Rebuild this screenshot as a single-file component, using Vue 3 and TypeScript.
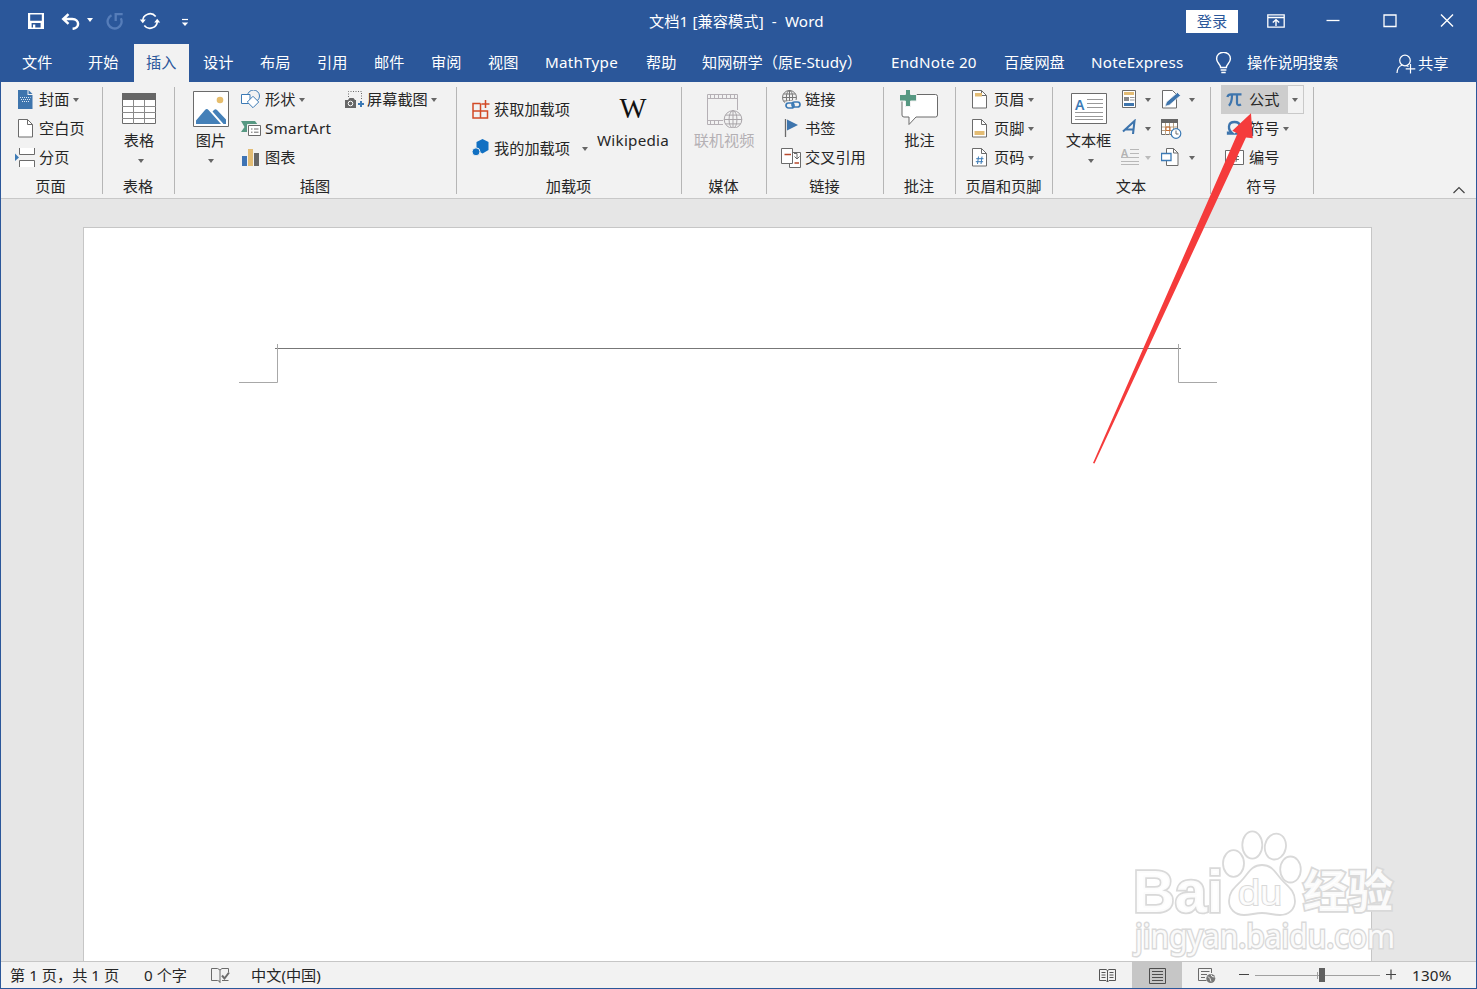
<script setup lang="ts">
import { h, type FunctionalComponent } from 'vue'

const G = '#6b6b6b'
const B = '#3c7ab5'
const pageShape = (fill = '#fff') =>
  `<path d="M.5.5h9l5 5v12.5h-14z" fill="${fill}" stroke="${G}"/><path d="M9.5.5v5h5" fill="none" stroke="${G}"/>`
const globe = (x: number, y: number, r: number, c: string) =>
  `<g transform="translate(${x} ${y})" fill="#f2f2f2" stroke="${c}"><circle r="${r}"/><ellipse rx="${r * 0.45}" ry="${r}" fill="none"/><path d="M${-r} 0H${r}M${-r * 0.85} ${-r * 0.5}H${r * 0.85}M${-r * 0.85} ${r * 0.5}H${r * 0.85}M0 ${-r}V${r}" fill="none"/></g>`

// name -> [width, height, markup]
const art: Record<string, [number, number, string]> = {
  save: [18, 18, `<path d="M1 1h16v16H1z" fill="#fff"/><path d="M3.2 2.4h11.6v6.4H3.2zM4.600 11h9v4.600H8.300v-3H6v3H4.600z" fill="#2b579a"/>`],
  undo: [19, 17, `<path d="M7.500 1.200 2.300 6l5.200 4.800M2.800 6h8.400c8 .4 7.500 9.400.4 9.800" fill="none" stroke="#fff" stroke-width="2.500"/>`],
  redo: [18, 18, `<path d="M5.500 3.200A7 7 0 1 0 14.800 6.200M9.700 9V2.200h7" fill="none" stroke="#567db9" stroke-width="2.300"/>`],
  sync: [22, 18, `<path d="M3.700 9a7.300 7.300 0 0 1 13-4.500M18.300 9a7.300 7.300 0 0 1-13 4.500" fill="none" stroke="#fff" stroke-width="1.600"/><path d="M.8 7.500h6L3.800 11.300zM15.200 10.500h6L18.200 6.700z" fill="#fff"/>`],
  custom: [8, 9, `<path d="M1 1.500h6" stroke="#fff" stroke-width="1.200"/><path d="M.8 4.500h6.400L4 8z" fill="#fff"/>`],
  ribbonopt: [18, 14, `<path d="M.8.800h16.400v12.400H.8z" fill="none" stroke="#fff" stroke-width="1.300"/><path d="M1 3.500h16M9 12V6M5.800 8.600 9 5.600l3.200 3" fill="none" stroke="#fff" stroke-width="1.400"/>`],
  min: [14, 14, `<path d="M.5 6.500h13" stroke="#fff" stroke-width="1.300"/>`],
  max: [14, 14, `<path d="M1 1h12v11.500H1z" fill="none" stroke="#fff" stroke-width="1.300"/>`],
  close: [14, 14, `<path d="M1 .5l12 12M13 .5l-12 12" stroke="#fff" stroke-width="1.400"/>`],
  bulb: [17, 22, `<path d="M5.600 15.500c0-3.300-4-4.500-4-8.800a6.900 6.500 0 0 1 13.800 0c0 4.300-4 5.500-4 8.800z" fill="none" stroke="#fff" stroke-width="1.400"/><path d="M5.600 18h5.800M6.300 20.500h4.400" stroke="#fff" stroke-width="1.300"/>`],
  share: [20, 20, `<circle cx="9" cy="6.500" r="5.300" fill="none" stroke="#fff" stroke-width="1.200"/><path d="M1 19c.2-4.200 2-7 5.300-8M14.500 10v9.500M9.700 14.800h9.600M10.500 11.700l2 .8" fill="none" stroke="#fff" stroke-width="1.200"/>`],
  cover: [20, 19, `<path d="M3 0h9.500v5H17.500v18.200H3z" fill="#3e75ad"/><path d="M13.500 0v4h4z" fill="#3e75ad"/><path d="M5 7.500h10.500M6 9.500h10M7 11.500h8" stroke="#dce8f4" stroke-dasharray="1 1" stroke-width="1.200"/>`],
  blank: [20, 19, `<g transform="translate(3 0)">${pageShape()}</g>`],
  brk: [20, 19, `<path d="M4.500 0v6.500h15V0M4.500 19v-6.500h15V19" fill="#fff" stroke="${G}"/><path d="M0 5.500 4 9.500 0 13z" fill="${B}"/>`],
  table: [34, 38, `<path d="M.5 4.500h33v29H.5z" fill="#fff" stroke="${G}"/><path d="M0 3h34v7H0z" fill="#666"/><path d="M11.500 10v24M22.500 10v24M0 16.500h34M0 22.500h34M0 28.500h34" stroke="#8a8a8a"/>`],
  pic: [36, 38, `<path d="M.5 1.500h35v35H.5z" fill="#fff" stroke="${G}"/><circle cx="27" cy="10" r="3.300" fill="#e6bd6c"/><path d="M3 34V30.500L12 20c1-1.300 2.500-1.300 3.500 0L28 34zM19.500 21.500l1.500-1.500c1-1 2-1 3 0L33 29.500V34h-2.500z" fill="#4480b8"/>`],
  shapes: [21, 19, `<circle cx="13.500" cy="6" r="6" fill="#f2f2f2" stroke="${B}"/><path d="M1.500 4.500h8.500v9H1.500z" fill="#fff" stroke="${B}"/><path d="M13 6.300l5.700 5.700-5.700 5.700L7.300 12z" fill="#fff" stroke="${B}"/>`],
  smart: [21, 19, `<path d="M1 2h14l3 4h-8v7H1l3.500-5z" fill="#569882"/><path d="M7.500 5.500h13v12h-13z" fill="#fff" stroke="#f2f2f2"/><path d="M8.500 6.500h12v10h-12z" fill="#fff" stroke="${G}"/><path d="M11 10h1.500M14 10h4.500M11 13.200h1.500M14 13.200h4.500" stroke="${G}"/>`],
  chart: [21, 19, `<path d="M2 8h5v10H2z" fill="#3e73b4"/><path d="M8 1h5v17H8z" fill="#e3bc74"/><path d="M14 5h5v13h-5z" fill="#666"/>`],
  shot: [21, 19, `<path d="M3.500 7V1.500h13V10" fill="none" stroke="${G}" stroke-dasharray="1 1.500"/><path d="M0 10h3l1.500-2h4L10 10h1v8H0z" fill="#666"/><circle cx="5.500" cy="13.500" r="2.300" fill="#666" stroke="#fff"/><path d="M16 11v6M13 14h6" stroke="${B}" stroke-width="2"/>`],
  getadd: [20, 20, `<path d="M9.500 3.500H2V18h14.500V11H2M9.500 3.500V18M14.500 0v8M10.500 4h8" fill="none" stroke="#d24a26" stroke-width="1.500"/>`],
  myadd: [20, 20, `<path d="M11.500 0l6 3v8l-6 3.500-6-3.500V3z" fill="#1170c2"/><circle cx="5" cy="12.800" r="4" fill="#1170c2" stroke="#f2f2f2"/>`],
  wiki: [34, 38, `<text x="17" y="28" text-anchor="middle" textLength="27" lengthAdjust="spacingAndGlyphs" font-family="Liberation Serif, serif" font-size="29" fill="#111">W</text>`],
  video: [38, 38, `<g stroke="#b5b0b5" fill="none"><path d="M2.500 4.500h30V20M2.500 4.500v30H18" fill="none"/><path d="M2.500 8.500h30M2.500 30.500H18M5.500 4v4M9.500 4v4M13.500 4v4M17.500 4v4M21.500 4v4M25.500 4v4M29.500 4v4M5.500 31v4M9.500 31v4M13.500 31v4"/></g>${globe(28, 29.5, 8.8, '#a9a5a9')}`],
  link: [21, 20, `${globe(8.5, 7.5, 7, '#777')}<g fill="none" stroke="#f2f2f2" stroke-width="4"><rect x="5" y="13" width="8" height="5" rx="2.500"/><rect x="11" y="12" width="8" height="5" rx="2.500"/></g><g fill="none" stroke="${B}" stroke-width="1.700"><rect x="5" y="13" width="8" height="5" rx="2.500"/><rect x="11" y="12" width="8" height="5" rx="2.500"/></g>`],
  flag: [21, 19, `<path d="M4.500 0v18" stroke="${G}" stroke-width="1.300"/><path d="M6 .5l11 5.500-11 5.500z" fill="#3e75ad"/>`],
  xref: [21, 20, `<path d="M8.500 4.500h11v15h-11z" fill="#fff" stroke="${G}"/><path d="M.5.500h11v15H.5z" fill="#fff" stroke="${G}"/><path d="M3.500 6.500H10M13.500 15H18" stroke="#b8492c" stroke-width="1.700"/><path d="M13 5.500h3v5M13.500 8.500l2.500 2.500 2.500-2.500" fill="none" stroke="${G}"/>`],
  comment: [40, 38, `<path d="M3.500 4.500h32a2 2 0 0 1 2 2v18.500a2 2 0 0 1-2 2H16l-7 7.500V27H4a2 2 0 0 1-2-2V6z" fill="#fff" stroke="${G}"/><path d="M-.5 4.500h6V-1h5v5.500h6V11h-6v5.500h-5V11h-6z" fill="#569882" stroke="#f2f2f2"/>`],
  head: [16, 19, `${pageShape()}<path d="M3 3h7v3.500H3z" fill="#e3bc74"/>`],
  foot: [16, 19, `${pageShape()}<path d="M2.500 12h10v4h-10z" fill="#e3bc74"/>`],
  num: [16, 19, `${pageShape()}<path d="M6.500 8.500l-1 7.500M10 8.500l-1 7.500M4.200 10.700h7.300M3.800 13.700h7.300" stroke="${B}"/>`],
  textbox: [36, 38, `<path d="M.5 3.500h35v30H.5z" fill="#fff" stroke="${G}"/><text x="4" y="19.500" font-family="Noto Sans, sans-serif" font-size="14" font-weight="600" fill="${B}">A</text><path d="M16 9.500h16M16 13.500h16M16 17.500h16M4 22.500h28M4 26.500h28M4 29.500h28" stroke="#999"/>`],
  parts: [16, 19, `<path d="M1.500.500h13v17h-13z" fill="#fff" stroke="${G}"/><path d="M3 2h10v3H3z" fill="#e3bc74"/><path d="M3 7h5v4H3z" fill="#888"/><path d="M9 7.500h4.500M9 10h4.500" stroke="#999"/><path d="M3 13h10v3H3z" fill="#3e75ad"/>`],
  wordart: [20, 19, `<path d="M2 12.500 13.500 2 12 15M4.500 10.500h8" fill="none" stroke="#3e75ad" stroke-width="2.100"/>`],
  dropcap: [20, 19, `<text x="0" y="8.500" font-family="Noto Sans, sans-serif" font-size="10.500" font-weight="600" fill="#b3b3b3">A</text><path d="M9 1.500h9M9 5.500h9M0 9.500h18M0 13.500h18M0 16.500h18" stroke="#b8b8b8"/>`],
  sign: [21, 19, `<path d="M1.500.500h10l4 4v13.500h-14z" fill="#fff" stroke="${G}"/><path d="M4 16.500l1.500-4.500 11-9.500 3 3-11 9.500z" fill="#3e75ad" stroke="#f2f2f2" stroke-width=".8"/>`],
  date: [21, 20, `<path d="M.5 1.500h16v14H.5z" fill="#fff" stroke="${G}"/><path d="M0 0h17v4H0z" fill="#666"/><path d="M4.500 4v12M8.500 4v12M12.500 4v12M1 8h15M1 11.500h15" stroke="#b9a184"/><path d="M5 8h4v3.500H5z" fill="none" stroke="#c86b2c"/><circle cx="15" cy="14.500" r="4.800" fill="#fff" stroke="${B}" stroke-width="1.200"/><path d="M15 11.500V15h2.500" fill="none" stroke="${G}"/>`],
  object: [21, 19, `<path d="M5.500.500h7l4.500 4.500v12.500H5.500z" fill="#fff" stroke="${G}"/><path d="M12.500.500V5H17" fill="none" stroke="${G}"/><path d="M.500 5.500h9.500v7H.5z" fill="#fff" stroke="${B}" stroke-width="1.300"/>`],
  pi: [20, 19, `<path d="M2.300 7C3 4.800 4 4.300 6 4.300h10.500M7 5c0 5-.7 8-3 10.800M12 5v8c0 2.300 2 2.600 4 1.500" fill="none" stroke="#3e75ad" stroke-width="2.200"/>`],
  omega: [20, 19, `<path d="M3 12.500v2h4.500c-5-4-5-11.500 2-11.500s7 7.500 2 11.500H16v-2" fill="none" stroke="#3e75ad" stroke-width="2.300"/>`],
  number: [20, 19, `<path d="M.5 2.500h18v14H.5z" fill="#fff" stroke="${G}"/><path d="M8 6l-1 8M12 6l-1 8M5 8.500h9M5 11.500h9" stroke="${G}"/>`],
  collapse: [12, 8, `<path d="M.5 7 6 1.500 11.500 7" fill="none" stroke="#444" stroke-width="1.200"/>`],
  proof: [19, 17, `<path d="M9 14.500 6.500 13.500H.5V1.500h6L9 3l2-1.500h6.500V5M9 3v13M11 13.500h6.500" fill="none" stroke="${G}"/><path d="M11 8.500l2.500 3 4.500-6" fill="none" stroke="${G}" stroke-width="2"/>`],
  read: [17, 15, `<path d="M8.500 2.500 7 1.500H.5v11H7l1.500 1.500 1.500-1.500h6.500v-11H10zV14M2.500 4.500h4M2.500 7h4M2.500 9.500h4M10.500 4.500h4M10.500 7h4M10.500 9.500h4" fill="none" stroke="#555"/>`],
  print: [17, 16, `<path d="M.5.500h16v15H.5zM3 3.500h11M3 6.500h11M3 9.500h11M3 12.500h11" fill="none" stroke="#4d4d4d"/>`],
  web: [18, 17, `<path d="M13.500 6V1.500H.5v12h8M3 4.500h8.500M3 7.500h6M3 10.500h4" fill="none" stroke="${G}"/><circle cx="12.800" cy="11.500" r="4.500" fill="#777"/><path d="M10 9.500l2 2 1 3M13 7.500l1 2 2.500.5" stroke="#eee" fill="none"/>`],
}

const Ico: FunctionalComponent<{ n: string }> = (p) => {
  const [w, ht, body] = art[p.n]
  return h('svg', { width: w, height: ht, viewBox: `0 0 ${w} ${ht}`, innerHTML: body })
}
Ico.props = ['n']

const title = '文档1 [兼容模式]  -  Word'

interface Tab { t: string; w: number; pad: number; cls?: string }
const tabs: Tab[] = [
  { t: '文件', w: 76, pad: 22 },
  { t: '开始', w: 58, pad: 12 },
  { t: '插入', w: 55, pad: 12, cls: 'active' },
  { t: '设计', w: 57, pad: 14 },
  { t: '布局', w: 57, pad: 14 },
  { t: '引用', w: 57, pad: 14 },
  { t: '邮件', w: 57, pad: 14 },
  { t: '审阅', w: 57, pad: 14 },
  { t: '视图', w: 57, pad: 14 },
  { t: 'MathType', w: 101, pad: 14, cls: 'latin' },
  { t: '帮助', w: 57, pad: 14 },
  { t: '知网研学（原E-Study）', w: 188, pad: 13 },
  { t: 'EndNote 20', w: 114, pad: 14, cls: 'latin' },
  { t: '百度网盘', w: 86, pad: 13 },
  { t: 'NoteExpress', w: 124, pad: 14, cls: 'latin' },
]
</script>

<template>
  <div class="window">
    <header class="titlebar">
      <div class="quick">
        <Ico n="save" class="q-save" /><Ico n="undo" class="q-undo" /><i class="caret light q-caret" />
        <Ico n="redo" class="q-redo" /><Ico n="sync" class="q-sync" /><Ico n="custom" class="q-custom" />
      </div>
      <div class="title">{{ title }}</div>
      <button class="login">登录</button>
      <div class="controls"><Ico n="ribbonopt" /><Ico n="min" /><Ico n="max" /><Ico n="close" /></div>
    </header>

    <nav class="tabs">
      <a v-for="tab in tabs" :key="tab.t" class="tab" :class="tab.cls" :style="{ width: tab.w + 'px', paddingLeft: tab.pad + 'px' }">{{ tab.t }}</a>
      <Ico n="bulb" class="bulb" />
      <span class="tell">操作说明搜索</span>
      <Ico n="share" class="share-ico" />
      <span class="share">共享</span>
    </nav>

    <div class="ribbon">
      <section class="group g-pages">
        <div class="body">
          <div class="col">
            <div class="row"><Ico n="cover" />封面<i class="caret" /></div>
            <div class="row"><Ico n="blank" />空白页</div>
            <div class="row"><Ico n="brk" />分页</div>
          </div>
        </div>
        <h6>页面</h6>
      </section>

      <section class="group g-table">
        <div class="body">
          <div class="big"><Ico n="table" /><span>表格</span><i class="caret shift" /></div>
        </div>
        <h6>表格</h6>
      </section>

      <section class="group g-illus">
        <div class="body">
          <div class="big"><Ico n="pic" /><span>图片</span><i class="caret" /></div>
          <div class="col first">
            <div class="row"><Ico n="shapes" />形状<i class="caret" /></div>
            <div class="row"><Ico n="smart" /><span class="smartart">SmartArt</span></div>
            <div class="row"><Ico n="chart" />图表</div>
          </div>
          <div class="col second">
            <div class="row"><Ico n="shot" />屏幕截图<i class="caret" /></div>
          </div>
        </div>
        <h6>插图</h6>
      </section>

      <section class="group g-addins">
        <div class="body">
          <div class="col addins">
            <div class="row"><Ico n="getadd" />获取加载项</div>
            <div class="row"><Ico n="myadd" />我的加载项<i class="caret" /></div>
          </div>
          <div class="big"><Ico n="wiki" /><span class="wikitext">Wikipedia</span></div>
        </div>
        <h6>加载项</h6>
      </section>

      <section class="group g-media">
        <div class="body">
          <div class="big disabled"><Ico n="video" /><span>联机视频</span></div>
        </div>
        <h6>媒体</h6>
      </section>

      <section class="group g-links">
        <div class="body">
          <div class="col">
            <div class="row"><Ico n="link" />链接</div>
            <div class="row"><Ico n="flag" />书签</div>
            <div class="row"><Ico n="xref" />交叉引用</div>
          </div>
        </div>
        <h6>链接</h6>
      </section>

      <section class="group g-comment">
        <div class="body">
          <div class="big"><Ico n="comment" /><span>批注</span></div>
        </div>
        <h6>批注</h6>
      </section>

      <section class="group g-header">
        <div class="body">
          <div class="col">
            <div class="row"><Ico n="head" />页眉<i class="caret" /></div>
            <div class="row"><Ico n="foot" />页脚<i class="caret" /></div>
            <div class="row"><Ico n="num" />页码<i class="caret" /></div>
          </div>
        </div>
        <h6>页眉和页脚</h6>
      </section>

      <section class="group g-text">
        <div class="body">
          <div class="big"><Ico n="textbox" /><span>文本框</span><i class="caret shift" /></div>
          <div class="minis">
            <div class="mini"><Ico n="parts" /><i class="caret" /></div>
            <div class="mini"><Ico n="sign" /><i class="caret" /></div>
            <div class="mini"><Ico n="wordart" /><i class="caret" /></div>
            <div class="mini"><Ico n="date" /></div>
            <div class="mini"><Ico n="dropcap" /><i class="caret pale" /></div>
            <div class="mini"><Ico n="object" /><i class="caret" /></div>
          </div>
        </div>
        <h6>文本</h6>
      </section>

      <section class="group g-symbols">
        <div class="body">
          <div class="col">
            <div class="row split"><div class="main"><Ico n="pi" />公式</div><div class="drop"><i class="caret" /></div></div>
            <div class="row"><Ico n="omega" />符号<i class="caret" /></div>
            <div class="row"><Ico n="number" />编号</div>
          </div>
        </div>
        <h6>符号</h6>
      </section>
      <Ico n="collapse" class="collapse" />
    </div>

    <main class="canvas">
      <article class="page">
        <svg class="marks" width="980" height="42" viewBox="238 342 980 42">
          <path d="M275 348.500H1181" stroke="#777" />
          <path d="M277.500 344V382.500H239M1178.500 344V382.500H1217" fill="none" stroke="#a8a8a8" />
        </svg>
      </article>
    </main>

    <footer class="status">
      <span class="s-page">第 1 页，共 1 页</span>
      <span class="s-words">0 个字</span>
      <Ico n="proof" class="s-proof" />
      <span class="s-lang">中文(中国)</span>
      <div class="views">
        <div class="view"><Ico n="read" /></div>
        <div class="view on"><Ico n="print" /></div>
        <div class="view"><Ico n="web" /></div>
      </div>
      <svg class="zoom" width="160" height="27" viewBox="1237 961 160 27">
        <path d="M1239 973.500h10M1386 973.500h10M1391 968.500v10" stroke="#444" stroke-width="1.200" />
        <path d="M1255 974.500h125M1317.500 971v7" stroke="#a0a0a0" />
        <path d="M1319 967h6v14h-6z" fill="#606060" />
      </svg>
      <span class="percent">130%</span>
    </footer>

    <svg class="watermark" width="270" height="134" viewBox="1130 826 270 134">
      <g fill="#fff" fill-opacity=".75" stroke="#d9d9d9" stroke-width="1.800">
        <ellipse cx="1233.500" cy="863.500" rx="10.500" ry="13.300" />
        <ellipse cx="1252.300" cy="845" rx="10" ry="13.600" />
        <ellipse cx="1275.500" cy="846.500" rx="10.500" ry="13" transform="rotate(12 1275 846)" />
        <ellipse cx="1290.500" cy="869.500" rx="10.300" ry="13" />
        <path d="M1262 865c10 0 13 7 19 14s14 11 14 22c0 9-7 14-15 14-7 0-11-2-18-2s-11 2-18 2c-9 0-15-6-15-14 0-11 8-15 14-22s9-14 19-14z" />
        <text class="wm-heavy" x="1133" y="912" font-size="60" textLength="90" lengthAdjust="spacingAndGlyphs" stroke-width="3.500">Bai</text>
        <text class="wm-du" x="1238" y="905" font-size="35" textLength="44" lengthAdjust="spacingAndGlyphs">du</text>
        <text class="wm-cjk" x="1303" y="908" font-size="45" textLength="90" lengthAdjust="spacingAndGlyphs" stroke-width="3.500">经验</text>
        <text class="wm-url" x="1135" y="948" font-size="33" textLength="260" lengthAdjust="spacingAndGlyphs" stroke-width="3">jingyan.baidu.com</text>
      </g>
    </svg>

    <svg class="pointer" width="164" height="354" viewBox="1091 111 164 354">
      <path d="M1251 113.300 1232.300 130.700 1237.500 133.500 1093 463 1094.500 463.500 1246 137.500 1252.700 138.300z" fill="#f53b3b" />
    </svg>
  </div>
</template>

<style>
html, body { margin: 0; overflow: hidden; }
</style>

<style scoped>
.window {
  position: relative; display: flex; flex-direction: column; width: 1477px; height: 989px; overflow: hidden;
  font-family: "Noto Sans", "Noto Sans CJK SC", sans-serif; font-size: 15.200px; line-height: 27px; color: #262626; background: #e6e6e6;
}
.window::after { content: ""; position: absolute; inset: 0; border: 1px solid #2b579a; pointer-events: none; }
.window * { box-sizing: border-box; }
svg { display: block; flex: none; }

.titlebar { display: flex; align-items: center; height: 42px; background: #2b579a; color: #fff; }
.quick { display: flex; align-items: center; width: 649px; padding-left: 27px; }
.q-undo { margin-left: 16px; }
.q-caret { margin: -2px 0 0 7px; }
.q-redo { margin-left: 13px; }
.q-sync { margin-left: 15px; }
.q-custom { margin: 2px 0 0 20px; }
.title { width: 537px; line-height: 42px; white-space: pre; letter-spacing: .1px; }
.login {
  width: 52px; height: 23px; padding: 0; border: 0; background: #fff; color: #2b579a;
  font: inherit; line-height: 23px; text-align: center;
}
.controls { display: flex; align-items: center; gap: 43px; margin-left: 29px; margin-top: -1px; }
.controls svg:first-child { margin-right: -2px; }

.tabs { display: flex; align-items: center; height: 40px; background: #2b579a; color: #fff; white-space: nowrap; }
.tab { flex: none; height: 38px; margin-top: 2px; line-height: 37px; }
.tab.latin { letter-spacing: .25px; }
.tab.active { background: #f2f2f2; color: #2b579a; }
.bulb { margin-left: 14px; margin-top: 2px; }
.tell { width: 149px; margin-left: 15px; margin-top: 1px; }
.share-ico { margin-top: 3px; }
.share { margin-left: 2px; margin-top: 2px; }

.ribbon { position: relative; display: flex; flex: none; height: 117px; background: #f2f2f2; border-bottom: 1px solid #c8c8c8; white-space: nowrap; }
.group { position: relative; flex: none; height: 116px; padding-top: 3px; }
.group::after { content: ""; position: absolute; top: 5px; right: 0; width: 1px; height: 107px; background: #b6b6b6; }
.group h6 { margin: 0; padding-right: 2px; font: inherit; line-height: 26px; text-align: center; }
.body { display: flex; height: 88px; }
.row { display: flex; align-items: center; height: 29px; gap: 4px; }
.caret { flex: none; width: 0; height: 0; border: 3.500px solid transparent; border-top: 4px solid #666; border-bottom: 0; }
.caret.light { border-top-color: #fff; }
.caret.pale { border-top-color: #bbb; }
.big { display: flex; flex-direction: column; align-items: center; padding-top: 5px; }
.big span { line-height: 25px; }
.big .caret { margin-top: 6px; }
.big .caret.shift { margin-left: 4px; }
.disabled { color: #b4b0b4; }

.g-pages { width: 103px; }
.g-pages .col { padding-left: 15px; }
.g-table { width: 72px; }
.g-table .big { width: 72px; }
.g-illus { width: 282px; }
.g-illus .big { width: 48px; margin-left: 12px; }
.g-illus .first { width: 105px; margin-left: 5px; }
.smartart { letter-spacing: .25px; }
.g-illus .second .row { gap: 3px; }
.g-illus .second .row svg { margin-right: -2px; }
.g-addins { width: 225px; }
.addins { width: 132px; padding: 5px 0 0 14px; }
.addins .row { height: 39px; gap: 3px; }
.addins .caret { margin-left: 9px; }
.g-addins .big { width: 88px; }
.wikitext { letter-spacing: .25px; }
.g-media { width: 85px; }
.g-media .big { width: 84px; }
.g-links { width: 117px; }
.g-links .col { padding-left: 14px; }
.g-links .row { gap: 3px; }
.g-comment { width: 72px; }
.g-comment .big { width: 71px; }
.g-header { width: 97px; }
.g-header .col { padding-left: 16px; }
.g-header .row svg { margin-right: 2px; }
.g-text { width: 158px; }
.g-text .big { width: 71px; }
.minis { display: grid; grid-template-columns: 40px 40px; grid-auto-rows: 29px; margin-left: -3px; }
.mini { display: flex; align-items: center; justify-content: space-between; width: 30px; }
.mini:nth-child(even) { width: 34px; }
.g-symbols { width: 103px; }
.g-symbols .col { padding-left: 10px; }
.g-symbols .row { padding-left: 4px; }
.g-symbols .row.split { padding: 0; gap: 0; }
.main { display: flex; align-items: center; gap: 4px; width: 67px; height: 29px; padding-left: 4px; background: #cdcdcd; }
.drop { display: flex; align-items: center; justify-content: center; width: 16px; height: 29px; padding-right: 1px; border: 1px solid #c9c9c9; border-left: 0; }
.collapse { align-self: flex-end; margin: 0 0 4px 139px; }

.canvas { flex: 1; display: flex; justify-content: center; padding: 28px 105px 0 83px; background: #e6e6e6; }
.page { width: 1289px; background: #fff; border: 1px solid #c6c6c6; border-bottom: 0; }
.marks { margin: 114px 0 0 154px; }

.status { display: flex; align-items: center; flex: none; height: 28px; border-top: 1px solid #c6c6c6; background: #f2f2f2; padding-left: 10px; white-space: nowrap; }
.s-page { width: 134px; }
.s-words { width: 67px; }
.s-lang { width: 832px; margin-left: 21px; }
.views { display: flex; margin-left: -1px; }
.view { display: flex; align-items: center; justify-content: center; width: 50px; height: 27px; }
.view.on { background: #c6c6c6; }
.zoom { margin-left: 5px; }
.percent { margin-left: 15px; letter-spacing: .2px; }

.watermark { position: absolute; left: 1130px; top: 826px; }
.watermark text { paint-order: stroke; fill-opacity: .9; }
.wm-heavy { font-family: "Liberation Sans", sans-serif; font-weight: 700; }
.wm-du { font-family: "Liberation Sans", sans-serif; }
.wm-cjk { font-family: "Noto Sans CJK SC", sans-serif; font-weight: 700; }
.wm-url { font-family: "Noto Sans", sans-serif; }
.pointer { position: absolute; left: 1091px; top: 111px; }
</style>
